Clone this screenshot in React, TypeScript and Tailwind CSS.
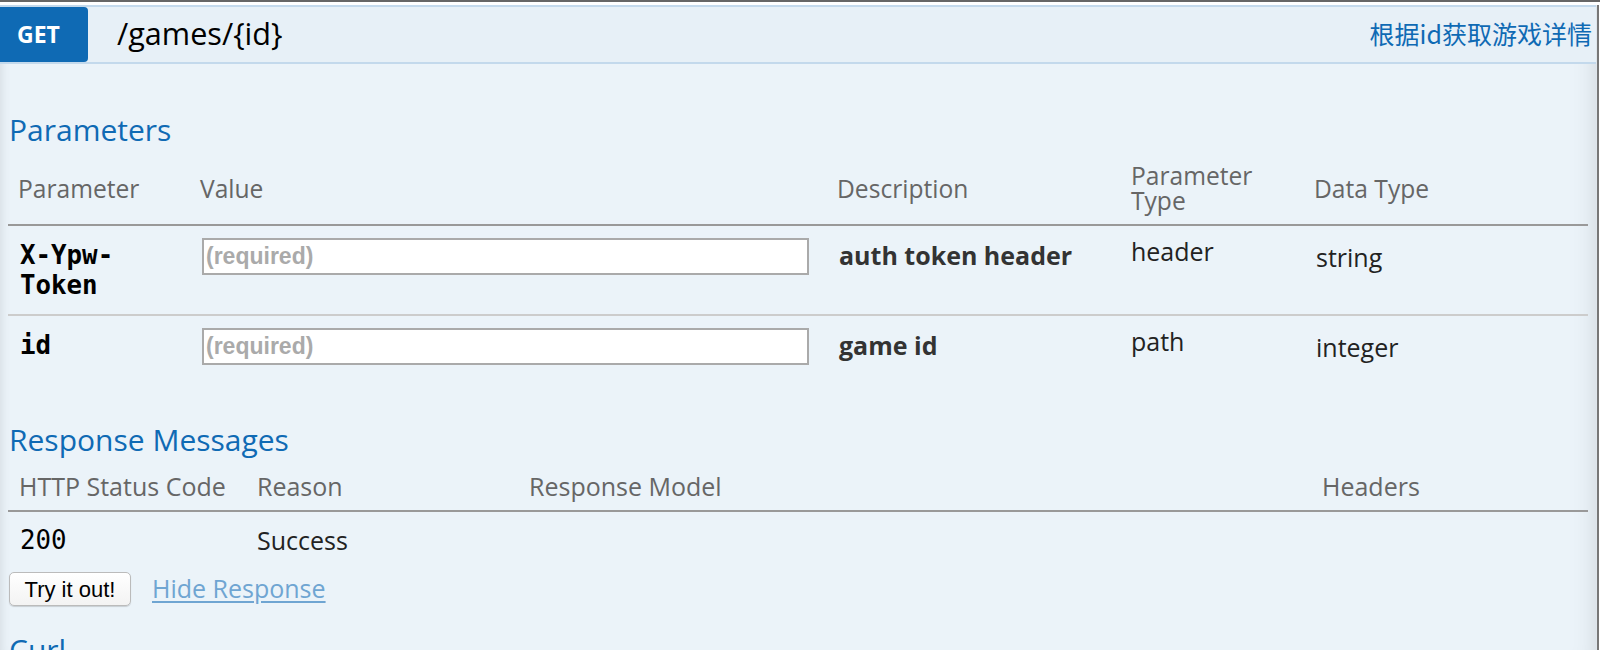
import React from "react";

const sans = "font-['Open_Sans',sans-serif]";
const mono = "font-['DejaVu_Sans_Mono',monospace]";

const paramRows = [
  { name: "X-Ypw-Token", desc: "auth token header", type: "header", data: "string" },
  { name: "id", desc: "game id", type: "path", data: "integer" },
];

function ParamInput() {
  return (
    <input
      placeholder="(required)"
      className="block w-[607px] h-[37px] -mt-[2px] border-2 border-[#aaa] bg-white px-[2px] font-['Liberation_Sans',sans-serif] text-[23px] font-bold placeholder:text-[#aaa] outline-none"
    />
  );
}

export default function App() {
  return (
    <div className={`w-[1600px] h-[650px] overflow-hidden bg-white border-t-2 border-[#666] ${sans}`}>
      <div className="flex h-full pt-[3px]">
        <div className="flex-1 flex flex-col bg-[#ebf3f9] shadow-[inset_10px_0_12px_-10px_rgba(0,0,0,0.12),inset_-24px_0_24px_-24px_rgba(0,0,0,0.12)]">
          {/* heading bar */}
          <div className="flex items-center h-[61px] bg-[#e7f0f7] border-y-2 border-[#c3d9ec]">
            <div className="h-[55px] w-[88px] bg-[#0f6ab4] rounded-r-[4px] flex items-center pl-[17px] text-white text-[23px] font-bold">
              GET
            </div>
            <div className="ml-[29px] text-[30.6px] text-black leading-none pb-[2px]">/games/{"{id}"}</div>
            <div className="ml-auto pr-[4px] font-['Noto_Sans_CJK_SC',sans-serif] text-[25px] text-[#0f6ab4] pb-[2px]">
              根据id获取游戏详情
            </div>
          </div>

          <div className="px-[8px]">
            <h4 className="mt-[48px] pl-[1px] text-[30px] leading-[36px] text-[#0f6ab4]">Parameters</h4>
            <div className="grid grid-cols-[182px_637px_294px_183px_1fr] text-[25px]">
              {["Parameter", "Value", "Description", "Parameter Type", "Data Type"].map((h) => (
                <div
                  key={h}
                  className="flex items-center pt-[15px] pb-[11px] pl-[10px] pr-[20px] text-[24.6px] leading-[25px] text-[#666] border-b-2 border-[#999]"
                >
                  {h}
                </div>
              ))}
              {paramRows.map((r, i) => (
                <React.Fragment key={r.name}>
                  <div
                    className={`pt-[14px] pb-[14px] pl-[12px] pr-[10px] ${mono} font-bold text-[25.8px] leading-[30px] text-black ${
                      i === 0 ? "border-b-2 border-[#ccc]" : ""
                    }`}
                  >
                    {r.name}
                  </div>
                  <div className={`pt-[14px] pb-[14px] pl-[12px] ${i === 0 ? "border-b-2 border-[#ccc]" : ""}`}>
                    <ParamInput />
                  </div>
                  <div
                    className={`pt-[14px] pb-[14px] pl-[12px] font-bold leading-[30px] text-[#333] ${
                      i === 0 ? "border-b-2 border-[#ccc]" : ""
                    }`}
                  >
                    {r.desc}
                  </div>
                  <div
                    className={`pt-[10px] pb-[14px] pl-[10px] leading-[30px] text-[#222] ${
                      i === 0 ? "border-b-2 border-[#ccc]" : ""
                    }`}
                  >
                    {r.type}
                  </div>
                  <div
                    className={`pt-[16px] pb-[14px] pl-[12px] leading-[30px] text-[#222] ${
                      i === 0 ? "border-b-2 border-[#ccc]" : ""
                    }`}
                  >
                    {r.data}
                  </div>
                </React.Fragment>
              ))}
            </div>

            <h4 className="mt-[43px] pl-[1px] text-[30px] leading-[36px] text-[#0f6ab4]">Response Messages</h4>
            <div className="grid grid-cols-[238px_272px_793px_1fr] text-[25px]">
              {["HTTP Status Code", "Reason", "Response Model", "Headers"].map((h) => (
                <div key={h} className="pt-[16px] pb-[11px] pl-[11px] leading-[25px] text-[#666] border-b-2 border-[#999]">
                  {h}
                </div>
              ))}
              <div className={`pt-[13px] pb-[14px] pl-[12px] ${mono} text-[25.8px] leading-[30px] text-black`}>200</div>
              <div className="pt-[13px] pb-[14px] pl-[11px] leading-[30px] text-[#222]">Success</div>
              <div />
              <div />
            </div>

            <div className="flex items-center mt-[1px] pl-[1px]">
              <button className="h-[34px] w-[122px] rounded-[5px] border border-[#bbb] bg-gradient-to-b from-white to-[#f3f3f3] shadow-[0_1px_1px_rgba(0,0,0,0.15)] font-['Liberation_Sans',sans-serif] text-[22px] text-black">
                Try it out!
              </button>
              <a href="#" className="ml-[21px] text-[25px] text-[#6fa5d2] underline underline-offset-[3px]">
                Hide Response
              </a>
            </div>

            <h4 className="mt-[24px] pl-[1px] text-[30px] leading-[36px] text-[#0f6ab4]">Curl</h4>
          </div>
        </div>
        <div className="w-[4px] flex">
          <div className="w-[1px] bg-[#dfe6ec]" />
          <div className="w-[2px] bg-[#777]" />
          <div className="w-[1px] bg-white" />
        </div>
      </div>
    </div>
  );
}
